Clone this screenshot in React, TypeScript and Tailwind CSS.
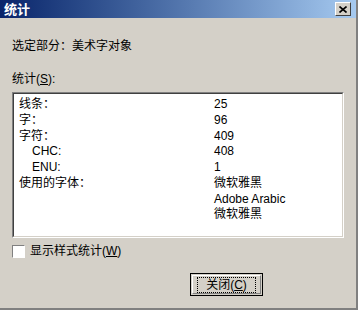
import React from 'react';

const rows = [
  { label: '线条：', value: '25', indent: false },
  { label: '字：', value: '96', indent: false },
  { label: '字符：', value: '409', indent: false },
  { label: 'CHC:', value: '408', indent: true },
  { label: 'ENU:', value: '1', indent: true },
  { label: '使用的字体：', value: '微软雅黑', indent: false },
  { label: '', value: 'Adobe Arabic', indent: false },
  { label: '', value: '微软雅黑', indent: false },
];

const App = () => {
  return (
    <div
      className="w-[358px] h-[310px] bg-[#d4d0c8] flex flex-col text-[12px] text-black border-r-2 border-b-2 border-[#808080]"
      style={{ fontFamily: '"Liberation Sans", "Noto Sans CJK SC", sans-serif' }}
    >
      <div className="h-[18px] flex items-center justify-between pl-[4px] pr-[4px] bg-gradient-to-r from-[#0a246a] to-[#a6caf0]">
        <span className="text-white font-bold text-[13px] leading-none">统计</span>
        <div className="w-[16px] h-[14px] bg-[#d4d0c8] border border-t-white border-l-white border-r-[#404040] border-b-[#404040] flex items-center justify-center mr-[1px]">
          <svg width="8" height="7" viewBox="0 0 8 7">
            <path d="M0.5 0.5 L7.5 6.5 M7.5 0.5 L0.5 6.5" stroke="#000" strokeWidth="1.6" />
          </svg>
        </div>
      </div>

      <div className="flex flex-col px-[12px] pt-[20px]">
        <div className="leading-[16px]">选定部分：美术字对象</div>
        <div className="mt-[17px] leading-[16px]">
          统计(<span className="underline">S</span>):
        </div>
        <div className="mt-[5px] w-[332px] h-[146px] bg-white border border-t-[#808080] border-l-[#808080] border-r-white border-b-white">
          <div className="h-full border border-t-[#404040] border-l-[#404040] border-r-[#d4d0c8] border-b-[#d4d0c8] pt-[2px] pl-[5px]">
            {rows.map((r, i) => (
              <div key={i} className="flex h-[15.8px] items-center">
                <span className={`w-[195px] ${r.indent ? 'pl-[13px]' : ''}`}>{r.label}</span>
                <span>{r.value}</span>
              </div>
            ))}
          </div>
        </div>

        <div className="flex items-center mt-[5px] gap-[5px]">
          <div className="w-[13px] h-[13px] bg-white border border-t-[#808080] border-l-[#808080] border-r-white border-b-white" />
          <span className="leading-[16px]">
            显示样式统计(<span className="underline">W</span>)
          </span>
        </div>

        <div className="flex mt-[14px] pl-[178px]">
          <div className="w-[73px] h-[23px] border border-black bg-[#d4d0c8] p-[1px]">
            <div className="w-full h-full border border-t-white border-l-white border-r-[#808080] border-b-[#808080] flex items-center justify-center">
              <div className="border border-dotted border-black px-[8px] leading-[14px]">
                关闭(<span className="underline">C</span>)
              </div>
            </div>
          </div>
        </div>
      </div>
    </div>
  );
};

export default App;
